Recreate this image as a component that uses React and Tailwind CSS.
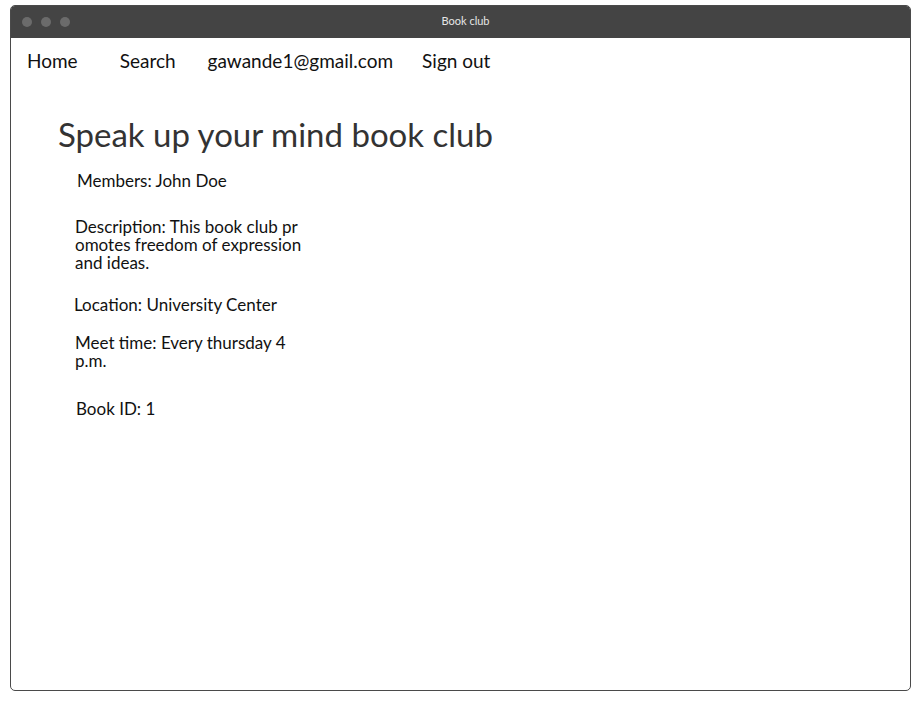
export default function App() {
	return (
		<div className="h-[703px] w-[923px] bg-white pt-[5px] pl-[10px] font-['Lato',sans-serif]">
			<div className="flex h-[686px] w-[901px] flex-col overflow-hidden rounded-[5px] border border-[#4a4a4a]">
				<div className="relative flex h-[32px] shrink-0 items-center bg-[#444444] px-[11px]">
					<div className="flex gap-[9px]">
						<span className="h-[10px] w-[10px] rounded-full bg-[#6b6b6b]" />
						<span className="h-[10px] w-[10px] rounded-full bg-[#6b6b6b]" />
						<span className="h-[10px] w-[10px] rounded-full bg-[#6b6b6b]" />
					</div>
					<div className="absolute inset-x-0 top-[7px] pl-[10px] text-center text-[11px] text-[#e6e6e6]">
						Book club
					</div>
				</div>
				<div className="flex-1 text-[#111]">
					<nav className="flex items-center pt-[9px] pl-[16px] text-[19px]">
						<a className="mr-[42px]">Home</a>
						<a className="mr-[32px]">Search</a>
						<a className="mr-[29px]">gawande1@gmail.com</a>
						<a>Sign out</a>
					</nav>
					<div className="pt-[38px] pl-[47px]">
						<h1 className="text-[33px] leading-[40px] text-[#333]">Speak up your mind book club</h1>
						<p className="mt-[14px] ml-[19px] text-[17px]">Members: John Doe</p>
						<p className="mt-[25px] ml-[17px] w-[232px] break-all text-[17px] leading-[18px]">
							Description: This book club promotes freedom of expression and ideas.
						</p>
						<p className="mt-[20px] ml-[16px] text-[17px]">Location: University Center</p>
						<p className="mt-[16px] ml-[17px] w-[232px] text-[17px] leading-[18px]">
							Meet time: Every thursday 4 p.m.
						</p>
						<p className="mt-[26px] ml-[18px] text-[17px]">Book ID: 1</p>
					</div>
				</div>
			</div>
		</div>
	);
}
